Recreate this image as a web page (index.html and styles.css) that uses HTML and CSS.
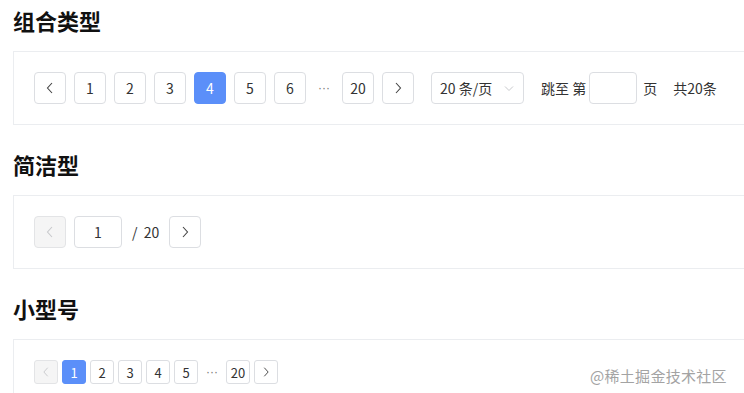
FILE: index.html
```html
<!DOCTYPE html>
<html lang="zh">
<head>
<meta charset="utf-8">
<link rel="stylesheet" href="styles.css">
</head>
<body>
<section class="demo">
  <h2 class="title">组合类型</h2>
  <div class="card">
    <div class="pager">
      <button class="btn"><svg class="chev" viewBox="0 0 14 14"><path d="M9 2 4.5 7 9 12"/></svg></button>
      <button class="btn">1</button>
      <button class="btn">2</button>
      <button class="btn">3</button>
      <button class="btn active">4</button>
      <button class="btn">5</button>
      <button class="btn">6</button>
      <span class="dots">···</span>
      <button class="btn">20</button>
      <button class="btn"><svg class="chev" viewBox="0 0 14 14"><path d="M5 2l4.5 5L5 12"/></svg></button>
      <div class="select"><span>20 条/页</span><svg class="down" viewBox="0 0 12 12"><path d="M2 4.5 6 8.5l4-4"/></svg></div>
      <span class="label jump">跳至 第</span>
      <span class="input"></span>
      <span class="label page">页</span>
      <span class="label total">共20条</span>
    </div>
  </div>
</section>
<section class="demo">
  <h2 class="title">简洁型</h2>
  <div class="card">
    <div class="pager">
      <button class="btn disabled"><svg class="chev" viewBox="0 0 14 14"><path d="M9 2 4.5 7 9 12"/></svg></button>
      <span class="input num">1</span>
      <span class="label slash">/&nbsp;&nbsp;20</span>
      <button class="btn"><svg class="chev" viewBox="0 0 14 14"><path d="M5 2l4.5 5L5 12"/></svg></button>
    </div>
  </div>
</section>
<section class="demo">
  <h2 class="title">小型号</h2>
  <div class="card">
    <div class="pager small">
      <button class="btn disabled"><svg class="chev" viewBox="0 0 14 14"><path d="M9 2 4.5 7 9 12"/></svg></button>
      <button class="btn active">1</button>
      <button class="btn">2</button>
      <button class="btn">3</button>
      <button class="btn">4</button>
      <button class="btn">5</button>
      <span class="dots">···</span>
      <button class="btn">20</button>
      <button class="btn"><svg class="chev" viewBox="0 0 14 14"><path d="M5 2l4.5 5L5 12"/></svg></button>
    </div>
  </div>
  <span class="watermark">@稀土掘金技术社区</span>
</section>
</body>
</html>
```
FILE: styles.css
```css
html, body {
  margin: 0;
  background: #ffffff;
  overflow: hidden;
}
body {
  padding: 5px 0 0 13px;
  font-family: "Noto Sans CJK SC", "Noto Sans", sans-serif;
  color: #1f2329;
  font-size: 14px;
}
.demo {
  position: relative;
  margin-bottom: 24px;
}
.title {
  margin: 0 0 16px 0;
  font-size: 22px;
  line-height: 30px;
  font-weight: 700;
  color: #111;
}
.card {
  width: 760px;
  box-sizing: border-box;
  border: 1px solid #ebedf0;
  padding: 20px 20px;
}
.pager {
  display: flex;
  align-items: center;
  gap: 8px;
  height: 32px;
}
.btn {
  box-sizing: border-box;
  width: 32px;
  height: 32px;
  padding: 0;
  border: 1px solid #dcdee2;
  border-radius: 4px;
  background: #fff;
  font-family: inherit;
  font-size: 14px;
  color: #333;
  display: flex;
  align-items: center;
  justify-content: center;
  line-height: 1;
}
.btn.active {
  background: #5b8ff9;
  border-color: #5b8ff9;
  color: #fff;
}
.btn.disabled {
  background: #f5f5f5;
  border-color: #e3e4e6;
}
.chev {
  width: 14px;
  height: 14px;
  fill: none;
  stroke: #444;
  stroke-width: 1.1;
}
.btn.disabled .chev {
  stroke: #c8c9cc;
}
.dots {
  width: 20px;
  text-align: center;
  color: #777;
  font-family: "Liberation Sans", sans-serif;
  font-size: 12px;
  letter-spacing: 0;
}
.select {
  box-sizing: border-box;
  width: 93px;
  height: 32px;
  margin-left: 9px;
  border: 1px solid #dcdee2;
  border-radius: 4px;
  display: flex;
  align-items: center;
  justify-content: space-between;
  padding: 0 8px 0 8px;
  color: #333;
}
.down {
  width: 12px;
  height: 12px;
  fill: none;
  stroke: #c8c9cc;
  stroke-width: 1;
}
.label {
  color: #333;
  white-space: nowrap;
}
.jump {
  margin-left: 9px;
  margin-right: -5px;
}
.input {
  box-sizing: border-box;
  width: 48px;
  height: 32px;
  border: 1px solid #dcdee2;
  border-radius: 4px;
  display: flex;
  align-items: center;
  justify-content: center;
  color: #333;
}
.page {
  margin-left: -2px;
}
.total {
  margin-left: 8px;
}
.slash {
  margin: 0 2px 0 2px;
}
.pager.small {
  gap: 4px;
  height: 24px;
}
.pager.small .btn {
  width: 24px;
  height: 24px;
  font-size: 13px;
  border-radius: 3px;
}
.pager.small .chev {
  width: 12px;
  height: 12px;
}
.pager.small .dots {
  width: 20px;
}
.watermark {
  position: absolute;
  left: 577px;
  top: 72px;
  font-size: 15px;
  color: #a3a3a3;
  letter-spacing: 0.3px;
}
```
